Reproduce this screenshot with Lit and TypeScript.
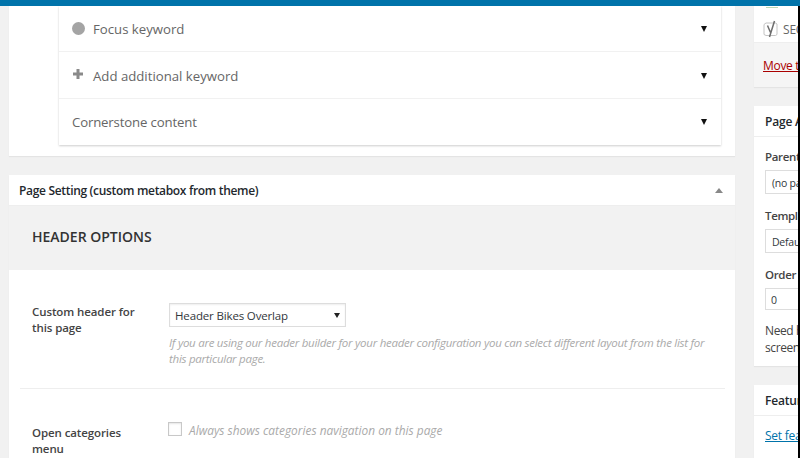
import { LitElement, html, css } from "lit";
import { customElement } from "lit/decorators.js";

@customElement("app-root")
export class AppRoot extends LitElement {
  static styles = css`
    :host { display: block; width: 800px; height: 458px; overflow: hidden; background: #f1f1f1;
      font-family: "Open Sans", "Noto Sans", sans-serif; font-size: 12px; color: #444; }
    .top { height: 6px; background: #0073aa; }
    .page { display: flex; height: 452px; padding-left: 9px; overflow: hidden; position: relative; }
    .main { width: 726px; flex: none; }
    .side { width: 120px; margin-left: 19px; flex: none; }
    .strip { position: absolute; top: -6px; right: 0; width: 2px; height: 458px; background: #000; }
    .card { background: #fff; box-shadow: 0 1px 1px rgba(0,0,0,.05); }
    .seo { height: 150px; padding-left: 50px; padding-right: 14px; margin-bottom: 19px; }
    .seo-inner { height: 139px; background: #fff; box-shadow: 0 1px 2px rgba(0,0,0,.2); }
    .row { height: 46.4px; display: flex; align-items: center; padding: 1px 13px 0; border-bottom: 1px solid #f1f1f1; box-sizing: border-box; font-size: 13.2px; color: #666; }
    .row:last-child { border-bottom: none; }
    .row .ico { width: 21px; flex: none; display: flex; }
    .row .label { flex: 1; }
    .row .corner { letter-spacing: -.15px; }
    .caret { width: 0; height: 0; border-left: 3.5px solid transparent; border-right: 3.5px solid transparent; border-top: 6.5px solid #111; margin-right: 1px; }
    .dot { width: 13px; height: 13px; border-radius: 50%; background: #a4a4a4; margin-top: -2px; }
    .hd { height: 30px; display: flex; align-items: center; justify-content: space-between; padding: 0 10px; border-bottom: 1px solid #eee; font-weight: 600; font-size: 12px; letter-spacing: -.32px; color: #23282d; }
    .up { width: 0; height: 0; border-left: 4px solid transparent; border-right: 4px solid transparent; border-bottom: 5px solid #888; margin-right: 2px; }
    .band { height: 64px; box-sizing: border-box; padding: 0 0 4px 23px; background: #f2f2f2; display: flex; align-items: center; font-size: 14px; font-weight: 600; color: #333; }
    .opt { display: grid; grid-template-columns: 137px 1fr; padding: 0 30px 0 23px; }
    .opt label { display: block; width: 108px; margin-top: 1px; font-weight: 600; font-size: 11.5px; line-height: 16px; letter-spacing: -.1px; color: #444; }
    .opt1 { padding-top: 33px; height: 85px; }
    .sel { width: 177px; height: 24px; box-sizing: border-box; border: 1px solid #ddd; box-shadow: inset 0 1px 2px rgba(0,0,0,.07); display: flex; align-items: center; justify-content: space-between; padding: 0 6px 0 5px; color: #32373c; font-size: 11.5px; letter-spacing: -.15px; }
    .sel i { width: 0; height: 0; border-left: 3px solid transparent; border-right: 3px solid transparent; border-top: 5px solid #222; margin-right: -1px; }
    .desc { margin: 8px 0 0; font-style: italic; color: #aaa; font-size: 11.5px; line-height: 16px; letter-spacing: -.27px; }
    .sep { height: 1px; background: #eee; margin: 0 10px 0 11px; }
    .opt2 { padding-top: 35px; min-height: 60px; }
    .chk-row { display: flex; gap: 7px; margin: -2px 0 0 -1px; font-style: italic; color: #aaa; font-size: 11.9px; line-height: 16px; }
    .chk { width: 14px; height: 14px; box-sizing: border-box; border: 1px solid #c8c8c8; box-shadow: inset 0 1px 2px rgba(0,0,0,.1); flex: none; }
    .pub { margin-bottom: 19px; }
    .peek { display: block; height: 5px; padding-left: 11px; }
    .pub-top { height: 32px; display: flex; align-items: center; padding: 5px 0 0 9px; gap: 5px; white-space: nowrap; overflow: hidden; color: #666; border-bottom: 1px solid #eee; box-sizing: border-box; letter-spacing: -.2px; }
    .pub-foot { height: 44px; background: #f5f5f5; padding: 14px 9px 0; box-sizing: border-box; color: #a00; text-decoration: underline; white-space: nowrap; overflow: hidden; letter-spacing: -.3px; }
    .a-hd { height: 30px; display: flex; align-items: center; padding-left: 11px; font-weight: 600; font-size: 12px; color: #23282d; border-bottom: 1px solid #eee; white-space: nowrap; letter-spacing: -.2px; }
    .a-body { padding: 11px 11px 0; height: 218px; white-space: nowrap; overflow: hidden; letter-spacing: -.25px; }
    .a-body b { display: block; font-weight: 600; line-height: 18px; font-size: 11.5px; color: #444; letter-spacing: -.35px; }
    .box { border: 1px solid #ddd; box-sizing: border-box; height: 24px; padding: 1px 6px 0; display: flex; align-items: center; margin: 4px 0 13px; font-size: 10.5px; color: #32373c; }
    .box.num { height: 22px; margin-bottom: 12px; padding-left: 5px; }
    .a-body p { margin: 0; line-height: 17px; letter-spacing: -.4px; }
    .feat { margin-top: 19px; }
    .feat .a-body { height: 50px; padding-top: 11px; color: #0073aa; text-decoration: underline; }
  `;

  render() {
    return html`
      <div class="top"></div>
      <div class="page">
        <div class="main">
          <div class="card seo">
            <div class="seo-inner">
              <div class="row">
                <span class="ico"><span class="dot"></span></span>
                <span class="label">Focus keyword</span><span class="caret"></span>
              </div>
              <div class="row">
                <span class="ico">
                  <svg width="12" height="12" viewBox="0 0 12 12" style="margin-top:-3px"><path d="M4.500 1h3v3.500H11v3H7.500V11h-3V7.500H1v-3h3.500z" fill="#8a8a8a"/></svg>
                </span>
                <span class="label">Add additional keyword</span><span class="caret"></span>
              </div>
              <div class="row">
                <span class="label corner">Cornerstone content</span><span class="caret"></span>
              </div>
            </div>
          </div>
          <div class="card">
            <div class="hd"><span>Page Setting (custom metabox from theme)</span><span class="up"></span></div>
            <div class="band">HEADER OPTIONS</div>
            <div class="opt opt1">
              <label>Custom header for this page</label>
              <div>
                <div class="sel"><span>Header Bikes Overlap</span><i></i></div>
                <p class="desc">If you are using our header builder for your header configuration you can select different layout from the list for this particular page.</p>
              </div>
            </div>
            <div class="sep"></div>
            <div class="opt opt2">
              <label>Open categories menu</label>
              <div class="chk-row"><span class="chk"></span><span>Always shows categories navigation on this page</span></div>
            </div>
          </div>
        </div>
        <div class="side">
          <div class="card pub">
            <svg class="peek" width="14" height="5" viewBox="0 0 14 5"><path d="M1 1.500h12" fill="none" stroke="#bcd8b4" stroke-width="1"/></svg>
            <div class="pub-top">
              <svg width="15" height="18" viewBox="0 0 15 18"><path d="M3 3h9.500l1.500 1v10.500l-1.500 1H3l-2-1V4.500z" fill="none" stroke="#c4c4c4"/><path d="M4.500 5.500l3 7M11.500 1 6.500 17" fill="none" stroke="#6e6e6e" stroke-width="1.500"/></svg>
              <span>SEO</span>
            </div>
            <div class="pub-foot">Move to Trash</div>
          </div>
          <div class="card">
            <div class="a-hd">Page Attributes</div>
            <div class="a-body">
              <b>Parent</b>
              <div class="box">(no parent)</div>
              <b>Template</b>
              <div class="box">Default Template</div>
              <b>Order</b>
              <div class="box num">0</div>
              <p>Need help? Use the<br />screen options</p>
            </div>
          </div>
          <div class="card feat">
            <div class="a-hd">Featured Image</div>
            <div class="a-body">Set featured image</div>
          </div>
        </div>
        <div class="strip"></div>
      </div>
    `;
  }
}
